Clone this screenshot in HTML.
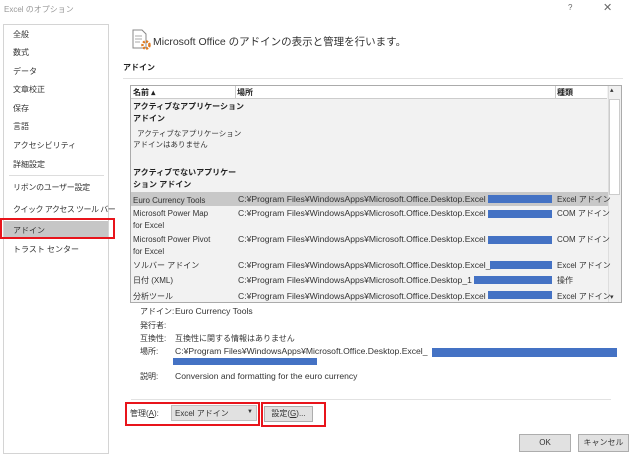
<!DOCTYPE html>
<html><head><meta charset="utf-8"><style>
*{margin:0;padding:0;box-sizing:border-box}
body{width:631px;height:450px;background:#fff;font-family:"Liberation Sans","Noto Sans CJK JP",sans-serif;font-size:8px;color:#333;position:relative;overflow:hidden}
.a{position:absolute;white-space:nowrap}
.p{font-size:8.6px}
.nav{position:absolute;left:3px;top:24px;width:106px;height:430px;border:1px solid #d4d4d4;background:#fff}
.b{font-weight:bold;color:#222}
.blue{position:absolute;background:#4472c4}
.btn{position:absolute;background:#e1e1e1;border:1px solid #adadad;text-align:center;line-height:14px}
.red{position:absolute;border:2px solid #e8141b}
</style></head><body>
<div class="a" style="left:4px;top:4px;color:#999;font-size:8px">Excel のオプション</div>
<div class="a" style="left:568px;top:3px;color:#666">?</div>
<div class="a" style="left:603px;top:1px;color:#666;font-size:11px">✕</div>
<div class="nav"></div>
<div class="a" style="left:13px;top:29px">全般</div>
<div class="a" style="left:13px;top:47px">数式</div>
<div class="a" style="left:13px;top:66px">データ</div>
<div class="a" style="left:13px;top:84px">文章校正</div>
<div class="a" style="left:13px;top:103px">保存</div>
<div class="a" style="left:13px;top:121px">言語</div>
<div class="a" style="left:13px;top:140px">アクセシビリティ</div>
<div class="a" style="left:13px;top:159px">詳細設定</div>
<div class="a" style="left:9px;top:175px;width:95px;height:1px;background:#ddd"></div>
<div class="a" style="left:13px;top:182px;letter-spacing:-0.3px">リボンのユーザー設定</div>
<div class="a" style="left:13px;top:204px;letter-spacing:-0.5px">クイック アクセス ツール バー</div>
<div class="a" style="left:4px;top:221px;width:104px;height:18px;background:#c6c6c6"></div>
<div class="a" style="left:13px;top:225px">アドイン</div>
<div class="red" style="left:0;top:218px;width:115px;height:21px"></div>
<div class="a" style="left:13px;top:244px">トラスト センター</div>

<svg class="a" style="left:131px;top:29px" width="20" height="22"><path d="M2 1h9l4 4v14H2z" fill="#fff" stroke="#888"/><path d="M4 7h7M4 10h7M4 13h5" stroke="#aaa"/><circle cx="15" cy="16" r="3.5" fill="none" stroke="#e07a1f" stroke-width="2.5" stroke-dasharray="2 1.3"/></svg>
<div class="a" style="left:153px;top:34px;font-size:10.5px;color:#333">Microsoft Office のアドインの表示と管理を行います。</div>
<div class="a b" style="left:123px;top:62px">アドイン</div>
<div class="a" style="left:123px;top:78px;width:500px;height:1px;background:#e2e2e2"></div>

<div class="a" style="left:130px;top:85px;width:492px;height:218px;border:1px solid #ababab;background:#f2f2f2"></div>
<div class="a" style="left:131px;top:86px;width:476px;height:13px;background:#fff;border-bottom:1px solid #ccc"></div>
<div class="a" style="left:235px;top:86px;width:1px;height:13px;background:#ccc"></div>
<div class="a" style="left:555px;top:86px;width:1px;height:13px;background:#ccc"></div>
<div class="a b" style="left:133px;top:87px;font-size:8px">名前 ▴</div>
<div class="a b" style="left:237px;top:87px;font-size:8px">場所</div>
<div class="a b" style="left:557px;top:87px;font-size:8px">種類</div>
<div class="a" style="left:608px;top:86px;width:13px;height:216px;background:#f0f0f0;border-left:1px solid #ddd"></div>
<div class="a" style="left:609px;top:99px;width:11px;height:96px;background:#fff;border:1px solid #ccc"></div>
<div class="a" style="left:610px;top:86px;font-size:7px">▴</div>
<div class="a" style="left:610px;top:293px;font-size:7px">▾</div>
<div class="a b" style="left:133px;top:101px;line-height:12px">アクティブなアプリケーション<br>アドイン</div>
<div class="a" style="left:133px;top:128px;line-height:11px;font-size:7.5px">&nbsp;&nbsp;アクティブなアプリケーション<br>アドインはありません</div>
<div class="a b" style="left:133px;top:167px;line-height:12px">アクティブでないアプリケー<br>ション アドイン</div>
<div class="a" style="left:131px;top:192px;width:477px;height:14px;background:#c8c8c8"></div>
<div class="a" style="left:133px;top:194px;line-height:13px">Euro Currency Tools</div>
<div class="a" style="left:133px;top:208px;line-height:12px">Microsoft Power Map<br>for Excel</div>
<div class="a" style="left:133px;top:234px;line-height:12px">Microsoft Power Pivot<br>for Excel</div>
<div class="a" style="left:133px;top:260px">ソルバー アドイン</div>
<div class="a" style="left:133px;top:275px">日付 (XML)</div>
<div class="a" style="left:133px;top:291px">分析ツール</div>
<div class="a p" style="left:238px;top:194px">C:¥Program Files¥WindowsApps¥Microsoft.Office.Desktop.Excel</div>
<div class="a p" style="left:238px;top:208px">C:¥Program Files¥WindowsApps¥Microsoft.Office.Desktop.Excel</div>
<div class="a p" style="left:238px;top:234px">C:¥Program Files¥WindowsApps¥Microsoft.Office.Desktop.Excel</div>
<div class="a p" style="left:238px;top:260px">C:¥Program Files¥WindowsApps¥Microsoft.Office.Desktop.Excel_</div>
<div class="a p" style="left:238px;top:275px">C:¥Program Files¥WindowsApps¥Microsoft.Office.Desktop_1</div>
<div class="a p" style="left:238px;top:291px">C:¥Program Files¥WindowsApps¥Microsoft.Office.Desktop.Excel</div>
<div class="blue" style="left:488px;top:195px;width:64px;height:8px"></div>
<div class="blue" style="left:488px;top:210px;width:64px;height:8px"></div>
<div class="blue" style="left:488px;top:236px;width:64px;height:8px"></div>
<div class="blue" style="left:490px;top:261px;width:62px;height:8px"></div>
<div class="blue" style="left:474px;top:276px;width:78px;height:8px"></div>
<div class="blue" style="left:488px;top:291px;width:64px;height:8px"></div>
<div class="a" style="left:557px;top:194px">Excel アドイン</div>
<div class="a" style="left:557px;top:208px">COM アドイン</div>
<div class="a" style="left:557px;top:234px">COM アドイン</div>
<div class="a" style="left:557px;top:260px">Excel アドイン</div>
<div class="a" style="left:557px;top:275px">操作</div>
<div class="a" style="left:557px;top:291px">Excel アドイン</div>

<div class="a" style="left:140px;top:306px">アドイン:</div><div class="a p" style="left:175px;top:306px">Euro Currency Tools</div>
<div class="a" style="left:140px;top:320px">発行者:</div>
<div class="a" style="left:140px;top:333px">互換性:</div><div class="a" style="left:175px;top:333px;font-size:8px">互換性に関する情報はありません</div>
<div class="a" style="left:140px;top:346px">場所:</div><div class="a p" style="left:175px;top:346px">C:¥Program Files¥WindowsApps¥Microsoft.Office.Desktop.Excel_</div>
<div class="blue" style="left:432px;top:348px;width:185px;height:9px"></div>
<div class="blue" style="left:173px;top:358px;width:144px;height:7px"></div>
<div class="a" style="left:140px;top:371px">説明:</div><div class="a p" style="left:175px;top:371px">Conversion and formatting for the euro currency</div>
<div class="a" style="left:131px;top:399px;width:480px;height:1px;background:#e2e2e2"></div>

<div class="a" style="left:130px;top:408px">管理(<u>A</u>):</div>
<div class="a" style="left:171px;top:405px;width:86px;height:16px;background:#e1e1e1;border:1px solid #c0c0c0"></div>
<div class="a" style="left:175px;top:408px">Excel アドイン</div>
<div class="a" style="left:247px;top:409px;font-size:6px">▼</div>
<div class="red" style="left:125px;top:402px;width:135px;height:24px"></div>
<div class="btn" style="left:264px;top:406px;width:49px;height:16px">設定(<u>G</u>)...</div>
<div class="red" style="left:261px;top:402px;width:65px;height:25px"></div>
<div class="btn" style="left:519px;top:434px;width:52px;height:18px;line-height:16px">OK</div>
<div class="btn" style="left:578px;top:434px;width:51px;height:18px;line-height:16px">キャンセル</div>
</body></html>
